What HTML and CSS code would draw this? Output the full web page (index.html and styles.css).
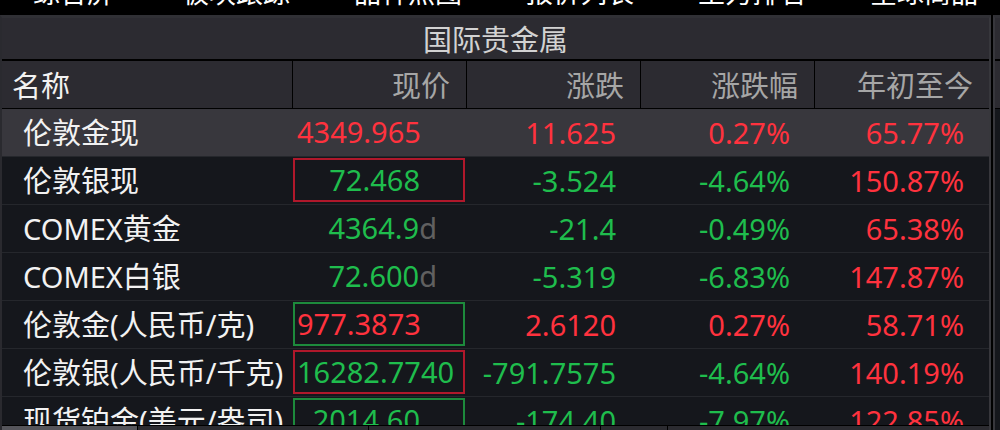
FILE: index.html
```html
<!DOCTYPE html>
<html lang="zh-CN">
<head>
<meta charset="utf-8">
<title>国际贵金属</title>
<link rel="stylesheet" href="styles.css">
</head>
<body>
<nav class="tabs">
  <span class="tab">综合屏</span>
  <span class="tab">板块跟踪</span>
  <span class="tab">品种热图</span>
  <span class="tab">报价列表</span>
  <span class="tab">主力排名</span>
  <span class="tab">全球商品</span>
</nav>
<div class="frame">
  <section class="panel">
    <div class="title">国际贵金属</div>
    <div class="row head">
      <div class="c name">名称</div>
      <div class="c">现价</div>
      <div class="c">涨跌</div>
      <div class="c">涨跌幅</div>
      <div class="c">年初至今</div>
    </div>
    <div class="body">
      <div class="row sel">
        <div class="c name">伦敦金现</div>
        <div class="c price"><span class="box up">4349.965</span></div>
        <div class="c up">11.625</div>
        <div class="c up">0.27%</div>
        <div class="c up">65.77%</div>
      </div>
      <div class="row">
        <div class="c name">伦敦银现</div>
        <div class="c price"><span class="box down flag-red">72.468</span></div>
        <div class="c down">-3.524</div>
        <div class="c down">-4.64%</div>
        <div class="c up">150.87%</div>
      </div>
      <div class="row">
        <div class="c name">COMEX黄金</div>
        <div class="c price"><span class="box down">4364.9<span class="sfx">d</span></span></div>
        <div class="c down">-21.4</div>
        <div class="c down">-0.49%</div>
        <div class="c up">65.38%</div>
      </div>
      <div class="row">
        <div class="c name">COMEX白银</div>
        <div class="c price"><span class="box down">72.600<span class="sfx">d</span></span></div>
        <div class="c down">-5.319</div>
        <div class="c down">-6.83%</div>
        <div class="c up">147.87%</div>
      </div>
      <div class="row">
        <div class="c name">伦敦金(人民币/克)</div>
        <div class="c price"><span class="box up flag-green">977.3873</span></div>
        <div class="c up">2.6120</div>
        <div class="c up">0.27%</div>
        <div class="c up">58.71%</div>
      </div>
      <div class="row">
        <div class="c name">伦敦银(人民币/千克)</div>
        <div class="c price"><span class="box down flag-red">16282.7740</span></div>
        <div class="c down">-791.7575</div>
        <div class="c down">-4.64%</div>
        <div class="c up">140.19%</div>
      </div>
      <div class="row">
        <div class="c name">现货铂金(美元/盎司)</div>
        <div class="c price"><span class="box down flag-green">2014.60</span></div>
        <div class="c down">-174.40</div>
        <div class="c down">-7.97%</div>
        <div class="c up">122.85%</div>
      </div>
    </div>
    <div class="strip">
      <span class="seg on"></span>
      <span class="seg s2"></span>
      <span class="seg s3"></span>
      <span class="seg s4"></span>
      <span class="seg s5"></span>
    </div>
  </section>
  <aside class="side">
    <div class="side-title"></div>
    <div class="side-head"></div>
  </aside>
</div>
</body>
</html>
```

FILE: styles.css
```css
* { box-sizing: border-box; margin: 0; padding: 0; }
html, body { width: 1000px; height: 430px; overflow: hidden; background: #000; }
body { font-family: "Noto Sans", "Noto Sans CJK SC", sans-serif; color: #f0f0f0; }

.tabs {
  height: 15px;
  overflow: hidden;
  display: flex;
  gap: 64px;
  padding-left: 33px;
  background: #000;
}
.tab {
  font-family: "Noto Sans CJK SC", sans-serif;
  font-size: 27px;
  line-height: 27px;
  margin-top: -22px;
  color: #fff;
  white-space: nowrap;
}
.tab:first-child { margin-right: 4px; }

.frame { display: flex; height: 415px; }

.panel {
  width: 991px;
  display: flex;
  flex-direction: column;
  border-top: 3px solid #303035;
  border-left: 2px solid #2a2a2f;
  border-right: 2px solid #37373c;
  background: #15171c;
}
.title {
  height: 43px;
  flex: none;
  background: #2c2b31;
  border-bottom: 2px solid #000;
  display: flex;
  align-items: center;
  justify-content: center;
  font-size: 29px;
  line-height: 1;
  color: #d2d2d2;
  font-family: "Noto Sans CJK SC", sans-serif;
}

.row {
  display: flex;
  height: 48px;
  flex: none;
  border-bottom: 1px solid #25272c;
  font-size: 29px;
  line-height: 1;
  white-space: nowrap;
}
.c {
  width: 174px;
  flex: none;
  display: flex;
  align-items: center;
  justify-content: flex-end;
  padding-right: 25px;
}
.c.name {
  width: 291px;
  justify-content: flex-start;
  padding: 0 0 0 21px;
  color: #f2f2f2;
}

.head {
  background: #2c2b31;
  border-bottom: 1px solid #000;
  color: #a6a6a6;
  font-family: "Noto Sans CJK SC", sans-serif;
}
.head .c { padding-right: 16px; border-right: 1px solid #000; }
.head .c.name { padding-left: 10px; padding-right: 0; }
.head .c:last-child { border-right: 0; }

.body { flex: 1; overflow: hidden; }
.sel { background: #38373d; }

.c.price {
  display: block;
  padding: 1px 0 0 0;
}
.box {
  display: block;
  width: 172px;
  height: 44px;
  line-height: 40px;
  border: 2px solid transparent;
  padding: 0 43px 0 2px;
  text-align: right;
  white-space: nowrap;
}
.flag-red { border-color: #b0182b; }
.flag-green { border-color: #1d8a3c; }
.sfx { color: #606060; margin-right: -17px; }

.up { color: #ff323e; }
.down { color: #1fbd4d; }

.strip {
  height: 5px;
  flex: none;
  border-top: 1px solid #000;
  display: flex;
  gap: 1px;
  background: #000;
}
.seg { height: 4px; background: #2b2b30; }
.seg.on { width: 135px; background: #55555b; }
.s2 { width: 230px; }
.s3 { width: 231px; }
.s4 { width: 66px; }
.s5 { flex: 1; }

.side {
  flex: 1;
  margin-left: 2px;
  border-left: 2px solid #37373c;
  border-top: 3px solid #303035;
  background: #15171c;
}
.side-title { height: 43px; background: #2c2b31; border-bottom: 2px solid #000; }
.side-head { height: 48px; background: #2c2b31; border-bottom: 1px solid #000; }
```
